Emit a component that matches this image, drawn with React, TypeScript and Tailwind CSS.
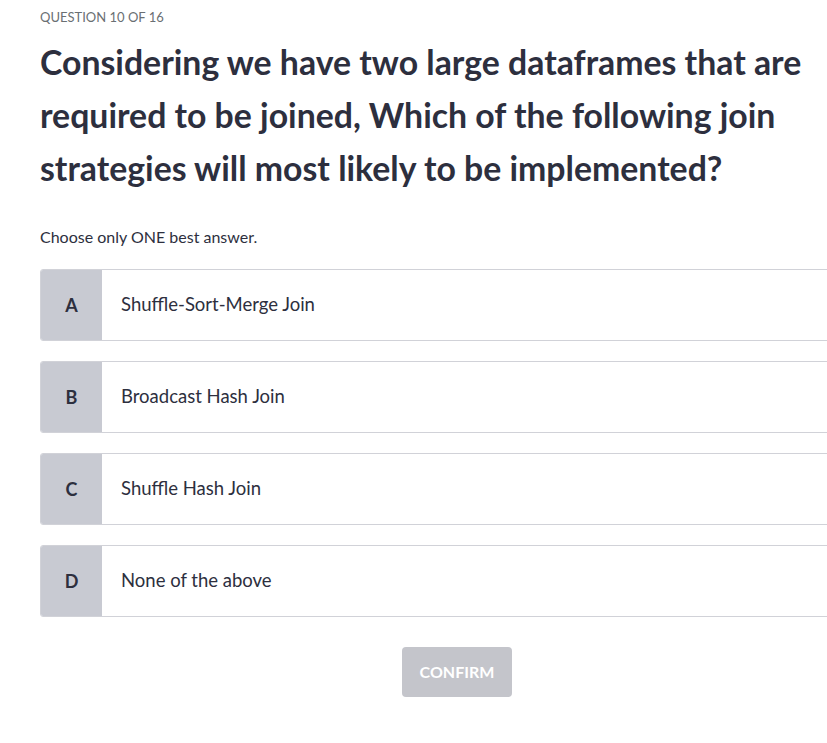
const OPTIONS = [
  { key: 'A', text: 'Shuffle-Sort-Merge Join' },
  { key: 'B', text: 'Broadcast Hash Join' },
  { key: 'C', text: 'Shuffle Hash Join' },
  { key: 'D', text: 'None of the above' },
]

export default function App() {
  return (
    <div className="w-[827px] h-[743px] overflow-hidden bg-white text-[#2d2f3e]" style={{ fontFamily: 'Lato, "Open Sans", sans-serif' }}>
      <div className="w-[834px] ml-[40px] pt-[8px]">
        <p className="text-[13px] leading-[18px] text-[#6a6f73] uppercase">Question 10 of 16</p>
        <h1 className="mt-[10px] text-[33.8px] leading-[53px] font-bold text-[#2d2f3e] pr-[20px]">
          Considering we have two large dataframes that are required to be joined, Which of the following join strategies will most likely to be implemented?
        </h1>
        <p className="mt-[32px] text-[16px] leading-[20px]">Choose only ONE best answer.</p>
        <div className="mt-[22px] flex flex-col gap-[20px]">
          {OPTIONS.map((o) => (
            <div key={o.key} className="flex h-[72px] border border-[#d1d2d8] rounded-l-[3px] overflow-hidden">
              <div className="w-[61px] shrink-0 bg-[#c8cad2] flex items-center justify-center text-[18px] font-bold">
                {o.key}
              </div>
              <div className="flex items-center pl-[19px] text-[18.5px]">{o.text}</div>
            </div>
          ))}
        </div>
        <div className="mt-[30px] flex justify-center">
          <button className="w-[110px] h-[50px] rounded-[4px] bg-[#c4c5cb] text-white font-bold text-[16px] uppercase">
            Confirm
          </button>
        </div>
      </div>
    </div>
  )
}
